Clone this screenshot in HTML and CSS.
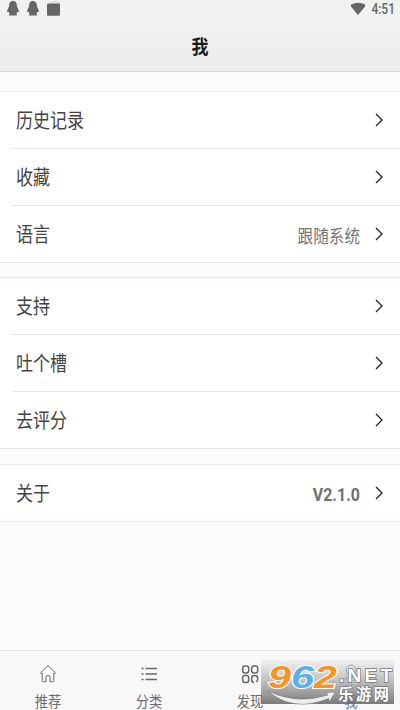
FILE: index.html
```html
<!DOCTYPE html>
<html lang="zh-CN">
<head>
<meta charset="utf-8">
<title>我</title>
<link rel="stylesheet" href="styles.css">
</head>
<body>
<header class="header">
  <div class="status">
    <svg class="notices" width="56" height="17" viewBox="0 0 56 17" fill="#666">
      <path id="penguin" d="M6 1C2.800 1 2 3.500 2 6.500L.2 10.500c-.3 1.700.2 2 1.500 1.200L2.500 14l-.8 1.500h8.600L9.500 14l.8-2.300c1.300.8 1.800.5 1.500-1.200L10 6.500C10 3.500 9.200 1 6 1z"/>
      <use href="#penguin" x="20"/>
      <path d="M43 4l4-2.500h2L53 4" fill="none" stroke="#ccc"/>
      <rect x="40" y="3.500" width="13" height="12.200" rx="1"/>
    </svg>
    <svg class="wifi" width="16" height="14" viewBox="0 0 16 14"><path d="M1 2.500Q8-1.200 15 2.500V4.500L8 13 1 4.500z" fill="#666"/></svg>
    <span class="time">4:51</span>
  </div>
  <h1 class="title">我</h1>
</header>
<main class="content">
  <section class="group">
    <div class="row"><span class="label">历史记录</span><svg class="chevron" viewBox="0 0 8 14"><path d="M1 1l6 6-6 6"/></svg></div>
    <div class="row"><span class="label">收藏</span><svg class="chevron" viewBox="0 0 8 14"><path d="M1 1l6 6-6 6"/></svg></div>
    <div class="row"><span class="label">语言</span><span class="value">跟随系统</span><svg class="chevron" viewBox="0 0 8 14"><path d="M1 1l6 6-6 6"/></svg></div>
  </section>
  <section class="group">
    <div class="row"><span class="label">支持</span><svg class="chevron" viewBox="0 0 8 14"><path d="M1 1l6 6-6 6"/></svg></div>
    <div class="row"><span class="label">吐个槽</span><svg class="chevron" viewBox="0 0 8 14"><path d="M1 1l6 6-6 6"/></svg></div>
    <div class="row"><span class="label">去评分</span><svg class="chevron" viewBox="0 0 8 14"><path d="M1 1l6 6-6 6"/></svg></div>
  </section>
  <section class="group about">
    <div class="row"><span class="label">关于</span><span class="value version">V2.1.0</span><svg class="chevron" viewBox="0 0 8 14"><path d="M1 1l6 6-6 6"/></svg></div>
  </section>
</main>
<nav class="tabs">
  <a class="tab"><svg class="icon" viewBox="0 0 18 20"><path d="M1.500 8.800L9 1.500l7.500 7.300-.9 1-.8-.5v7.200q0 1.300-1.200 1.300H11v-4.500q0-1.800-2-1.800t-2 1.800v4.500H4.400q-1.200 0-1.200-1.300V9.300l-.8.5z"/></svg><span>推荐</span></a>
  <a class="tab"><svg class="icon list" viewBox="0 0 18 20"><path d="M1.500 4.500h2M1.500 10h2M1.500 15.500h2M5.500 4.500H17M5.500 10H17M5.500 15.500H17"/></svg><span>分类</span></a>
  <a class="tab"><svg class="icon grid" viewBox="0 0 18 20"><rect x="1.700" y="2" width="6" height="7" rx="2.200"/><rect x="10.700" y="2" width="6" height="7" rx="2.200"/><rect x="1.700" y="11.500" width="6" height="7" rx="2.200"/><path d="M13 18.500q-2.300 0-2.300-2.500v-2q0-2.500 3-2.500t3 2.500v1.500q0 1.500-1.500 2.500"/></svg><span>发现</span></a>
  <a class="tab active"><svg class="icon" viewBox="0 0 18 20"><circle cx="9" cy="6" r="5"/><path d="M1 19q1-6 8-6t8 6"/></svg><span>我</span></a>
</nav>
<svg class="watermark" width="134" height="52" viewBox="0 0 134 52">
  <defs>
    <linearGradient id="shade" x1="0" y1="0" x2="0" y2="1"><stop offset="0" stop-color="#999" stop-opacity=".1"/><stop offset=".5" stop-color="#808080" stop-opacity=".5"/><stop offset="1" stop-color="#6c6c6c" stop-opacity=".9"/></linearGradient>
  </defs>
  <rect y="3" width="133" height="44" fill="url(#shade)"/>
  <path d="M7 34Q36 48 67 38l-2-2.500 9.500-.5-6 9.500-1-3Q32 56 7 34z" fill="#eee" stroke="#777" stroke-width=".6"/>
  <g class="digits">
    <text x="7" y="30.500" textLength="23" lengthAdjust="spacingAndGlyphs" fill="#f79425">9</text>
    <text x="30" y="30.500" textLength="23" lengthAdjust="spacingAndGlyphs" fill="#5cb0e8">6</text>
    <text x="53" y="30.500" textLength="23" lengthAdjust="spacingAndGlyphs" fill="#f79425">2</text>
  </g>
  <text class="net" x="78" y="25" textLength="53">.NET</text>
  <text class="brand" x="77" y="42.500" textLength="51">乐游网</text>
</svg>
</body>
</html>
```

FILE: styles.css
```css
* { box-sizing: border-box; }
body {
  margin: 0;
  width: 400px;
  height: 710px;
  display: flex;
  flex-direction: column;
  overflow: hidden;
  background: #fafcfa;
  color: #444;
  font-family: Roboto, "Noto Sans CJK SC", sans-serif;
}
.header {
  height: 72px;
  flex: none;
  border-bottom: 1px solid #d6d7d6;
  background: linear-gradient(#eff2ef, #f0f2f1 30%, #ececec);
}
.status {
  height: 18px;
  display: flex;
  align-items: flex-start;
  padding: 0 5px 0 7px;
  color: #666;
}
.wifi { margin: 2px 5px 0 auto; }
.time { font-size: 12px; line-height: 18px; font-weight: 500; transform: scaleY(1.15); }
.title {
  margin: 0;
  height: 54px;
  line-height: 58px;
  text-align: center;
  font-size: 17px;
  font-weight: 700;
  color: #1c1e1c;
  transform: scaleY(1.15);
}
.content { flex: 1; padding-top: 19px; }
.group {
  margin-bottom: 14px;
  background: #fff;
  border-top: 1px solid #e9ebe9;
  border-bottom: 1px solid #e6e8e6;
}
.about { margin-top: 15px; }
.row {
  height: 57px;
  margin-left: 12px;
  padding: 0 17px 0 4px;
  display: flex;
  align-items: center;
}
.row:first-child { height: 56px; }
.row + .row { border-top: 1px solid #e8e8e8; }
.label, .value { display: block; line-height: 26px; transform: scaleY(1.18); }
.label { font-size: 17px; position: relative; top: 1px; }
.value { margin-left: auto; font-size: 15.600px; color: #757575; position: relative; top: 3px; }
.version { top: 2px; font-size: 16px; font-weight: 700; color: #707070; transform: scaleY(1.1); }
.chevron {
  width: 8px;
  height: 14px;
  margin-left: auto;
  fill: none;
  stroke: #222;
  stroke-width: 1.3;
}
.value + .chevron { margin-left: 15px; }
.tabs {
  height: 60px;
  flex: none;
  display: flex;
  border-top: 1px solid #dedfde;
  background: #f8f8f8;
}
.tab {
  width: 101px;
  flex: none;
  display: flex;
  flex-direction: column;
  align-items: center;
  padding: 13px 5px 0 0;
  font-size: 13.300px;
  line-height: 20px;
  color: #6c6c6c;
}
.tab span { margin-top: 8px; transform: scaleY(1.14); }
.icon { width: 18px; height: 20px; flex: none; fill: none; stroke: #666; stroke-width: 1; }
.list { stroke-width: 1.5; }
.grid { stroke-width: 1.5; }
.active { color: #5a82c8; }
.active .icon { stroke: #8fabdc; }
.watermark { position: absolute; left: 261px; top: 657px; overflow: visible; }
.digits {
  font: italic 700 32px "Liberation Sans", sans-serif;
  stroke: #fff;
  stroke-width: 2px;
  paint-order: stroke;
}
.net {
  font: 700 19px "Liberation Sans", sans-serif;
  fill: #fff;
  stroke: #777;
  stroke-width: 1.500px;
  paint-order: stroke;
}
.brand {
  font: 700 15.500px "Noto Sans CJK SC", sans-serif;
  fill: #fff;
  stroke: #777;
  stroke-width: 1.500px;
  paint-order: stroke;
}
```
